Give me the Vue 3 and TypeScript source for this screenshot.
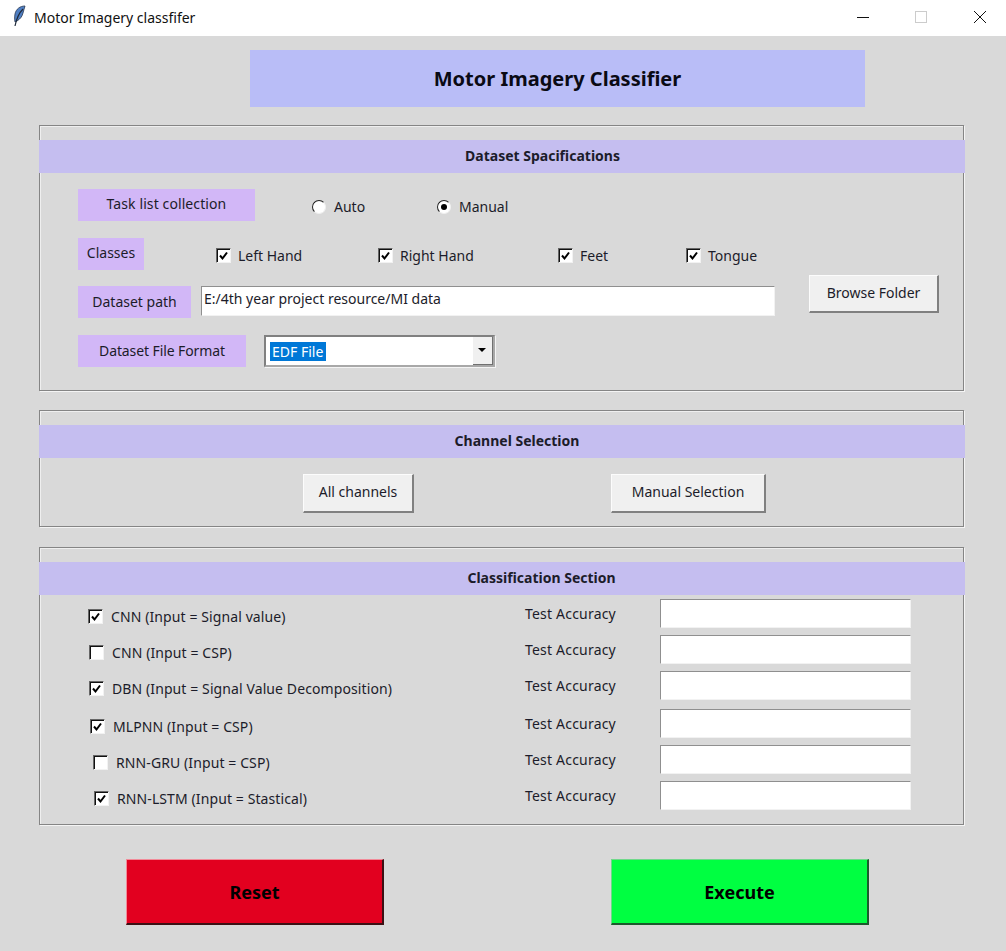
<template>
  <div class="window">
    <div class="titlebar">
      <svg class="feather" width="14" height="22" viewBox="0 0 14 22">
        <path d="M13 1C8 1 4 4 3 9c-.5 3-.5 5 0 8l2-1c3-2 5-4 6-8 .6-2.500 1.500-5 2-7z" fill="#4f7fc4" stroke="#27364f" stroke-width=".8" />
        <path d="M11 4C8 7 5 11 3 21" fill="none" stroke="#1f2a3a" stroke-width="1.200" />
      </svg>
      <span class="title-text">Motor Imagery classfifer</span>
      <div class="controls">
        <span class="ctl-min"></span>
        <span class="ctl-max"></span>
        <svg class="ctl-close" width="12" height="12" viewBox="0 0 12 12">
          <path d="M0 0L12 12M12 0L0 12" stroke="#111" stroke-width="1" fill="none" />
        </svg>
      </div>
    </div>

    <div class="main">
      <div class="heading">Motor Imagery Classifier</div>

      <section class="group group-dataset">
        <div class="band band-dataset">Dataset Spacifications</div>
        <div class="row row-task">
          <div class="tag tag-task">Task list collection</div>
          <div class="radios">
            <label class="opt" v-for="r in radios" :key="r.name">
              <span class="radio" :class="{ on: r.on }"></span>{{ r.name }}
            </label>
          </div>
        </div>
        <div class="row row-classes">
          <div class="tag tag-classes">Classes</div>
          <div class="class-list">
            <label class="opt" v-for="c in classes" :key="c">
              <span class="check">
                <svg width="11" height="10" viewBox="0 0 11 10"><path d="M2 4.500L4.500 7.500L9 1.500" fill="none" stroke="#000" stroke-width="2" /></svg>
              </span>{{ c }}
            </label>
          </div>
        </div>
        <div class="row row-path">
          <div class="tag tag-path">Dataset path</div>
          <div class="entry entry-path">E:/4th year project resource/MI data</div>
          <button class="btn btn-browse">Browse Folder</button>
        </div>
        <div class="row row-format">
          <div class="tag tag-format">Dataset File Format</div>
          <div class="combo">
            <span class="combo-sel">EDF File</span>
            <span class="combo-arrow"></span>
          </div>
        </div>
      </section>

      <section class="group group-channel">
        <div class="band band-channel">Channel Selection</div>
        <div class="channel-btns">
          <button class="btn btn-all">All channels</button>
          <button class="btn btn-manual">Manual Selection</button>
        </div>
      </section>

      <section class="group group-class">
        <div class="band band-class">Classification Section</div>
        <div class="models">
          <div class="model" v-for="m in models" :key="m.name" :style="{ marginTop: m.shift + 'px' }">
            <label class="opt model-opt" :style="{ paddingLeft: m.indent + 'px' }">
              <span class="check">
                <svg v-if="m.on" width="11" height="10" viewBox="0 0 11 10"><path d="M2 4.500L4.500 7.500L9 1.500" fill="none" stroke="#000" stroke-width="2" /></svg>
              </span>{{ m.name }}
            </label>
            <span class="acc">Test Accuracy</span>
            <div class="entry entry-acc"></div>
          </div>
        </div>
      </section>

      <div class="actions">
        <button class="big big-reset">Reset</button>
        <button class="big big-exec">Execute</button>
      </div>
    </div>
  </div>
</template>

<script setup lang="ts">
const radios = [
  { name: "Auto", on: false },
  { name: "Manual", on: true },
];
const classes: string[] = ["Left Hand", "Right Hand", "Feet", "Tongue"];
// checkboxes in the list are not quite lined up in the original
const models = [
  { name: "CNN (Input = Signal value)", on: true, indent: 48, shift: 0 },
  { name: "CNN (Input = CSP)", on: false, indent: 49, shift: 0 },
  { name: "DBN (Input = Signal Value Decomposition)", on: true, indent: 49, shift: 0 },
  { name: "MLPNN (Input = CSP)", on: true, indent: 50, shift: 2 },
  { name: "RNN-GRU (Input = CSP)", on: false, indent: 53, shift: 0 },
  { name: "RNN-LSTM (Input = Stastical)", on: true, indent: 54, shift: 0 },
];
</script>

<style>
html,
body {
  margin: 0;
  background: #d9d9d9;
}
</style>

<style scoped>
.window {
  width: 1006px;
  height: 951px;
  overflow: hidden;
  background: #d9d9d9;
  font-family: "Noto Sans", "Open Sans", sans-serif;
  font-size: 14px;
  color: #1c1c2a;
}
.titlebar {
  height: 36px;
  background: #fff;
  display: flex;
  align-items: center;
  padding: 0 0 2px 12px;
  box-sizing: border-box;
}
.feather {
  margin-right: 8px;
  margin-top: -2px;
}
.title-text {
  font-size: 14px;
  color: #111;
}
.controls {
  margin-left: auto;
  display: flex;
  align-items: center;
  padding-right: 20px;
}
.ctl-min {
  width: 12px;
  height: 1px;
  background: #111;
}
.ctl-max {
  width: 10px;
  height: 10px;
  border: 1px solid #ccc;
  margin-left: 46px;
}
.ctl-close {
  margin-left: 47px;
}
.main {
  padding: 14px 0 0 39px;
}
.heading {
  width: 615px;
  height: 57px;
  margin-left: 211px;
  margin-bottom: 18px;
  background: #b9bdf7;
  display: flex;
  align-items: center;
  justify-content: center;
  font-size: 20px;
  font-weight: 700;
  color: #0a0a14;
}
.group {
  width: 923px;
  border: 1px solid #858585;
  box-shadow: inset 1px 1px 0 #efefef, 1px 1px 0 #f4f4f4;
  padding-top: 14px;
  margin-bottom: 19px;
  box-sizing: content-box;
}
.group-dataset {
  height: 250px;
}
.group-channel {
  height: 101px;
  margin-bottom: 20px;
}
.group-class {
  height: 262px;
  margin-bottom: 34px;
}
.band {
  height: 33px;
  margin: 0 -2px 0 -1px;
  padding-bottom: 2px;
  box-sizing: border-box;
  background: #c5bef0;
  display: flex;
  align-items: center;
  justify-content: center;
  font-size: 14px;
  font-weight: 700;
}
.band-dataset {
  padding-left: 81px;
}
.band-channel {
  padding-left: 30px;
}
.band-class {
  padding-left: 79px;
}
.row {
  display: flex;
  align-items: flex-start;
  padding-left: 38px;
}
.row-task {
  margin-top: 16px;
}
.row-classes {
  margin-top: 17px;
}
.row-path {
  margin-top: 16px;
}
.row-format {
  margin-top: 17px;
}
.tag {
  height: 32px;
  background: #d2b7f7;
  display: flex;
  align-items: center;
  justify-content: center;
  padding-bottom: 2px;
  box-sizing: border-box;
}
.tag-task {
  width: 177px;
  padding-bottom: 3px;
  letter-spacing: 0.1px;
}
.tag-classes {
  width: 66px;
  padding-bottom: 4px;
}
.tag-path {
  width: 113px;
}
.tag-format {
  width: 168px;
  letter-spacing: -0.1px;
}
.opt {
  display: flex;
  align-items: center;
  white-space: nowrap;
}
.radios {
  display: grid;
  grid-template-columns: 125px auto;
  margin-left: 57px;
  margin-top: 8px;
}
.radio {
  width: 12px;
  height: 12px;
  margin-right: 8px;
  border-radius: 50%;
  background: #fff;
  border: 1px solid #f0f0f0;
  border-top-color: #222;
  border-left-color: #222;
  position: relative;
}
.radio.on::after {
  content: "";
  position: absolute;
  left: 3px;
  top: 3px;
  width: 6px;
  height: 6px;
  border-radius: 50%;
  background: #000;
}
.check {
  width: 13px;
  height: 13px;
  margin-right: 8px;
  background: #fff;
  border: 1px solid #f2f2f2;
  border-top-color: #666;
  border-left-color: #666;
  box-shadow: inset 1px 1px 0 #111;
  display: flex;
  align-items: center;
  justify-content: center;
  flex: none;
}
.class-list {
  display: grid;
  grid-template-columns: 162px 180px 128px auto;
  margin-left: 72px;
  margin-top: 8px;
}
.class-list .check {
  margin-right: 7px;
}
.entry {
  background: #fff;
  border-top: 1px solid #8f8f8f;
  border-left: 1px solid #8f8f8f;
  border-right: 1px solid #f2f2f2;
  border-bottom: 1px solid #f2f2f2;
  box-sizing: border-box;
}
.entry-path {
  width: 574px;
  height: 30px;
  margin-left: 10px;
  padding: 2px 2px;
  line-height: 20px;
}
.btn {
  font: inherit;
  color: inherit;
  background: #f0f0f0;
  border: 0;
  border-top: 1px solid #fcfcfc;
  border-left: 1px solid #fcfcfc;
  border-right: 2px solid #808080;
  border-bottom: 2px solid #808080;
  padding: 0 0 2px;
}
.btn-browse {
  width: 130px;
  height: 38px;
  margin: -11px 0 0 34px;
}
.combo {
  width: 231px;
  height: 32px;
  margin-left: 18px;
  background: #fff;
  border: 2px solid #808080;
  border-right-color: #a8a8a8;
  border-bottom-color: #a8a8a8;
  box-shadow: 1px 1px 0 #f4f4f4;
  box-sizing: border-box;
  display: flex;
  align-items: center;
  padding-left: 4px;
  position: relative;
}
.combo-sel {
  background: #0078d7;
  color: #fff;
  padding: 0 0 0 2px;
  width: 56px;
  box-sizing: border-box;
  line-height: 19px;
  white-space: nowrap;
  overflow: hidden;
}
.combo-arrow {
  position: absolute;
  right: 0;
  top: 0;
  bottom: 0;
  width: 20px;
  background: #f0f0f0;
  border-right: 1px solid #707070;
  border-bottom: 1px solid #707070;
  box-sizing: border-box;
}
.combo-arrow::after {
  content: "";
  position: absolute;
  left: 5px;
  top: 11px;
  border-left: 4px solid transparent;
  border-right: 4px solid transparent;
  border-top: 4px solid #000;
}
.channel-btns {
  display: flex;
  gap: 197px;
  padding: 16px 0 0 263px;
}
.channel-btns .btn {
  height: 39px;
  padding-bottom: 4px;
}
.btn-all {
  width: 111px;
}
.btn-manual {
  width: 155px;
}
.models {
  padding-top: 4px;
}
.model {
  display: grid;
  grid-template-columns: 485px 135px 251px;
  height: 36px;
  align-items: start;
}
.model-opt {
  margin-top: 8px;
  letter-spacing: 0.1px;
}
.acc {
  margin-top: 5px;
  line-height: 20px;
  letter-spacing: 0.2px;
}
.entry-acc {
  height: 29px;
}
.actions {
  display: flex;
  gap: 227px;
  padding: 0 0 0 87px;
}
.big {
  width: 258px;
  height: 66px;
  font: inherit;
  font-size: 18px;
  font-weight: 700;
  color: #000;
  border: 0;
  padding: 0;
  border-right: 2px solid #222;
  border-bottom: 2px solid #222;
}
.big-reset {
  background: #e2001f;
  border-top: 1px solid #f28a98;
  border-left: 1px solid #f28a98;
  border-right-color: #3c1014;
  border-bottom-color: #3c1014;
}
.big-exec {
  background: #00ff41;
  border-top: 1px solid #6fd98a;
  border-left: 1px solid #6fd98a;
  border-right-color: #1c5a2c;
  border-bottom-color: #1c5a2c;
}
</style>
